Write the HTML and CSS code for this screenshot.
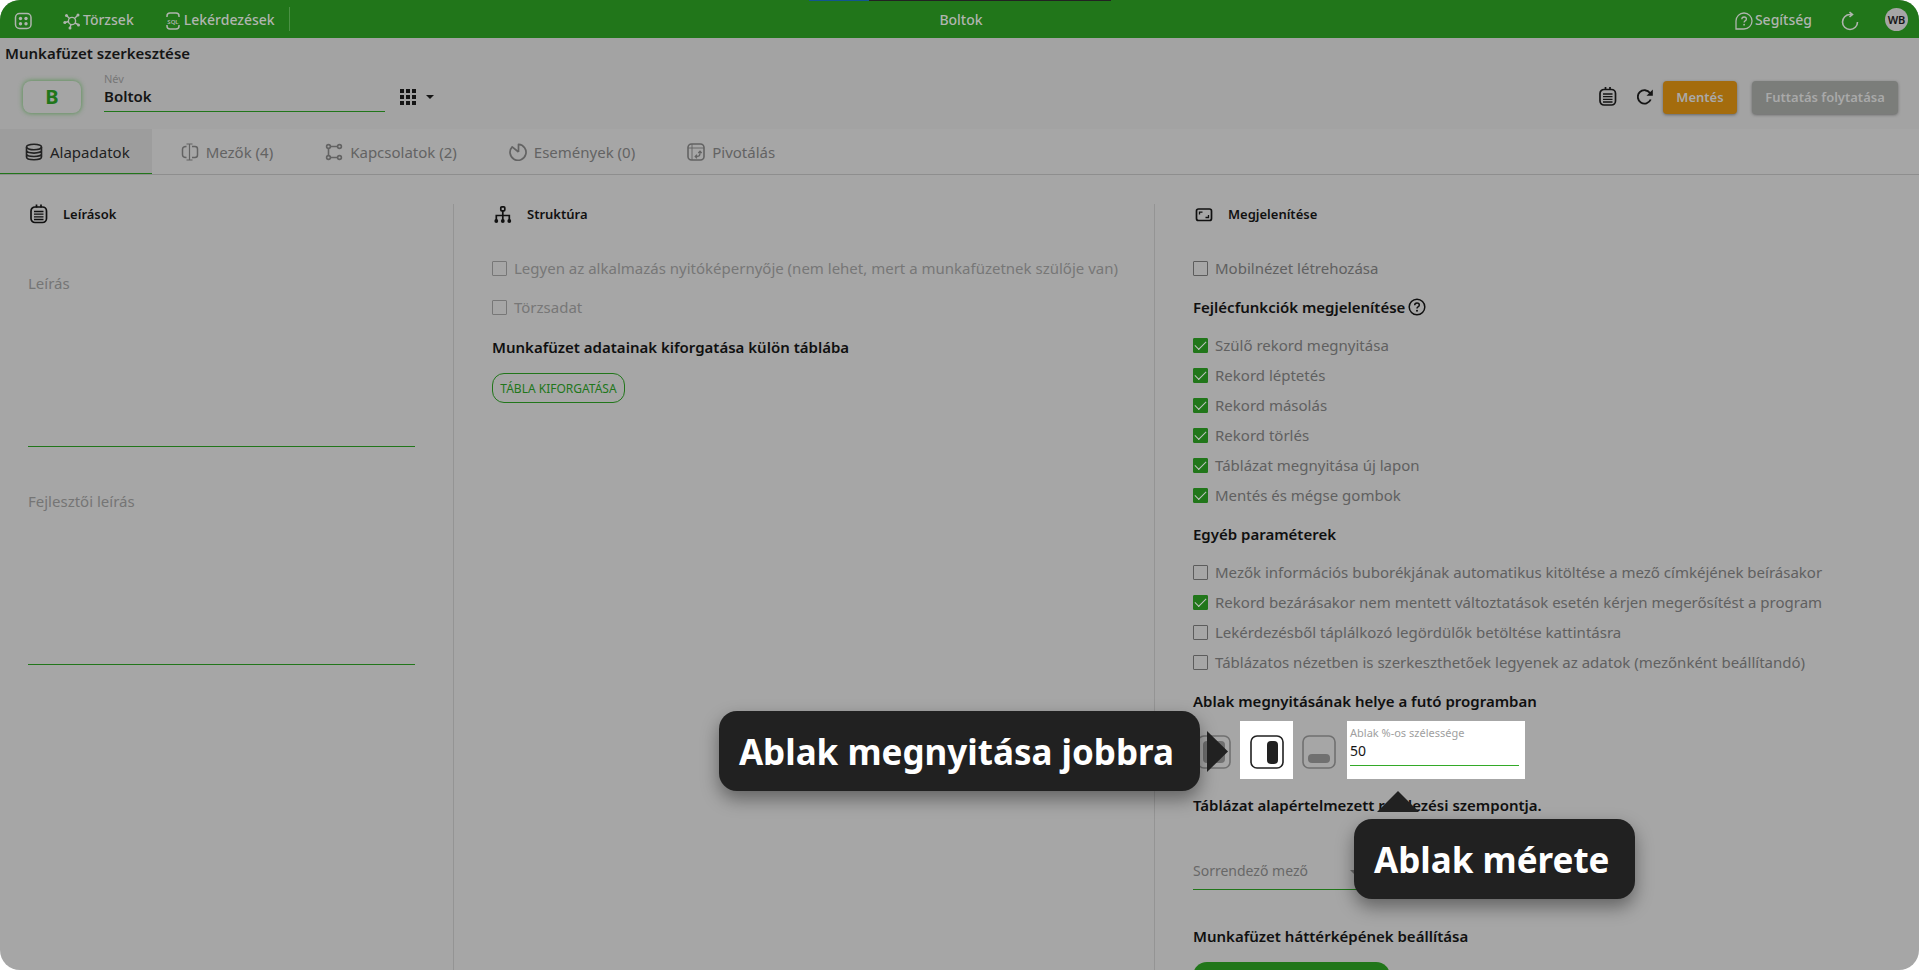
FILE: index.html
```html
<!DOCTYPE html>
<html lang="hu">
<head>
<meta charset="utf-8">
<title>Boltok – Munkafüzet szerkesztése</title>
<link rel="stylesheet" href="styles.css">
</head>
<body>
<div class="app">
  <header class="topbar">
    <nav class="topnav">
      <button class="icon-btn" aria-label="Alkalmazások"><svg class="ico18" viewBox="0 0 18 18"><rect x="1.500" y="1.500" width="15.500" height="15" rx="4" fill="none" stroke="currentColor" stroke-width="1.500"/><g fill="currentColor"><circle cx="6.500" cy="6.500" r="1.700"/><circle cx="12" cy="6.500" r="1.700"/><circle cx="6.500" cy="11.800" r="1.700"/><circle cx="12" cy="11.800" r="1.700"/></g></svg></button>
      <a class="navlink" href="#"><svg class="ico18" viewBox="0 0 18 18"><g fill="none" stroke="currentColor" stroke-width="1.400"><circle cx="9" cy="9" r="3.600"/><path d="M6.500 6.500 4 4M11.500 6.500 14.500 3.500M5.500 9.500 2 10.500M12 11l3 1.500M8 12.500 7 16"/></g><g fill="currentColor"><circle cx="3.500" cy="3.500" r="1.500"/><circle cx="15" cy="3" r="1.500"/><circle cx="1.800" cy="10.500" r="1.500"/><circle cx="15.500" cy="13" r="1.500"/><circle cx="7" cy="16" r="1.500"/></g></svg>Törzsek</a>
      <a class="navlink second" href="#"><svg class="ico18" viewBox="0 0 18 18"><path d="M3 5V4q0-3 3-3h6q3 0 3 3v1M3 13v1q0 3 3 3h6q3 0 3-3v-1" fill="none" stroke="currentColor" stroke-width="1.500"/><text x="9" y="11.500" text-anchor="middle" class="sql">SQL</text></svg>Lekérdezések</a>
    </nav>
    <span class="apptitle">Boltok</span>
    <div class="topright">
      <a class="navlink" href="#"><svg class="ico18" viewBox="0 0 18 18"><g fill="none" stroke="currentColor" stroke-width="1.300"><path d="M1 17V9a8 8 0 1 1 8 8Z"/><path d="M6.800 7.300q0-2.300 2.300-2.300t2.300 2q0 1.200-1.300 1.900-1 .6-1 1.700"/></g><circle cx="9.100" cy="12.700" r=".9" fill="currentColor"/></svg>Segítség</a>
      <button class="icon-btn" aria-label="Frissítés"><svg class="ico20" viewBox="0 0 20 20"><path d="M17.500 11a7.500 7.500 0 1 1-7.500-7.500h2M9.500 1 12.500 3.500 9.500 6" fill="none" stroke="currentColor" stroke-width="1.600"/></svg></button>
      <span class="avatar">WB</span>
    </div>
    <div class="strip"><i></i></div>
  </header>

  <section class="workbook">
    <h1>Munkafüzet szerkesztése</h1>
    <div class="toolbar">
      <span class="badge">B</span>
      <div class="namefield"><label for="nev">Név</label><input id="nev" value="Boltok"></div>
      <button class="gridpick" aria-label="Ikon választása"><svg class="ico16" viewBox="0 0 16 16"><path d="M0 0h4v4H0zM6 0h4v4H6zM12 0h4v4h-4zM0 6h4v4H0zM6 6h4v4H6zM12 6h4v4h-4zM0 12h4v4H0zM6 12h4v4H6zM12 12h4v4h-4z" fill="currentColor"/></svg><svg class="caret" viewBox="0 0 8 4"><path d="M0 0h8L4 4z" fill="currentColor"/></svg></button>
      <div class="actions">
        <button class="icon-btn dark" aria-label="Leírás"><svg class="ico20" viewBox="0 0 20 20"><g fill="none" stroke="currentColor"><rect x="3" y="2.500" width="15.500" height="15.500" rx="4" stroke-width="1.700"/><path d="M6 7h9.500M6 9.700h9.500M6 12.400h9.500M6 15h9.500" stroke-width="1.300"/><path d="M8.500 0v3M13 0v3" stroke-width="1.700"/></g></svg></button>
        <button class="icon-btn dark reload" aria-label="Újratöltés"><svg class="ico16" viewBox="0 0 16 16"><path d="M13.700 10.500A6.700 6.700 0 1 1 13 4" fill="none" stroke="currentColor" stroke-width="1.900"/><path d="M15.800.500v6.300H9.500z" fill="currentColor"/></svg></button>
        <button class="btn save">Mentés</button>
        <button class="btn run">Futtatás folytatása</button>
      </div>
    </div>
  </section>

  <nav class="tabs">
    <button class="tab active"><svg class="ico18" viewBox="0 0 18 18"><g fill="none" stroke="currentColor" stroke-width="1.600"><ellipse cx="9" cy="4" rx="7.500" ry="2.800"/><path d="M1.500 4v10c0 3.700 15 3.700 15 0V4M1.500 7.300c0 3.700 15 3.700 15 0M1.500 10.700c0 3.700 15 3.700 15 0"/></g></svg>Alapadatok</button>
    <button class="tab"><svg class="ico18" viewBox="0 0 18 18"><g fill="none" stroke="currentColor" stroke-width="1.500"><path d="M5.500 3.500H5Q1.500 3.500 1.500 6.500v5q0 3 3.500 3h.5M11 3.500h3q2.500 0 2.500 2.500v6q0 2.500-2.500 2.500h-3"/><path d="M8.500 1v16M5.500 1h6M5.500 17h6" stroke-width="1.200"/></g></svg>Mezők (4)</button>
    <button class="tab"><svg class="ico18" viewBox="0 0 18 18"><g fill="none" stroke="currentColor" stroke-width="1.600"><circle cx="3.500" cy="3.500" r="1.900"/><circle cx="14.500" cy="3.500" r="1.900"/><circle cx="3.500" cy="14.500" r="1.900"/><circle cx="14.500" cy="14.500" r="1.900"/><path d="M5.500 3.500h7M3.500 5.500v7M5.500 14.500h7"/></g></svg>Kapcsolatok (2)</button>
    <button class="tab"><svg class="ico18" viewBox="0 0 18 18"><path d="M9.500 9V1.300A8 8 0 1 1 3.200 3.800L9.500 9" fill="none" stroke="currentColor" stroke-width="1.700" stroke-linejoin="round"/></svg>Események (0)</button>
    <button class="tab"><svg class="ico18" viewBox="0 0 18 18"><g fill="none" stroke="currentColor"><rect x="1" y="1" width="16" height="16" rx="3.500" stroke-width="1.600"/><path d="M1 5h16M5 1v16" stroke-width=".9"/><path d="M8.500 13.500h1.500q3 0 3-3V8.500M11.300 10l1.700-1.800L14.700 10M10 11.800l-1.800 1.700L10 15.200" stroke-width="1.200"/></g></svg>Pivotálás</button>
  </nav>

  <main class="columns">
    <section class="col first">
      <h2><svg class="ico20" viewBox="0 0 20 20"><g fill="none" stroke="currentColor"><rect x="3" y="3" width="15.500" height="15.500" rx="4" stroke-width="1.700"/><path d="M6 7.500h9.500M6 10.200h9.500M6 12.900h9.500M6 15.500h9.500" stroke-width="1.300"/><path d="M8.500.5v3M13 .5v3" stroke-width="1.700"/></g></svg>Leírások</h2>
      <textarea aria-label="Leírás" placeholder="Leírás"></textarea>
      <textarea aria-label="Fejlesztői leírás" placeholder="Fejlesztői leírás"></textarea>
    </section>

    <section class="col middle">
      <h2><svg class="ico20" viewBox="0 0 20 20"><g fill="none" stroke="currentColor" stroke-width="1.700"><rect x="8.800" y="2.800" width="4" height="4" rx="1"/><path d="M10.800 7v9M4.300 16v-4.500h13v4.500"/></g><g fill="currentColor"><circle cx="4.300" cy="17" r="1.900"/><circle cx="10.800" cy="17" r="1.900"/><circle cx="17.300" cy="17" r="1.900"/></g></svg>Struktúra</h2>
      <div class="spaced">
        <label class="check off"><input type="checkbox" disabled>Legyen az alkalmazás nyitóképernyője (nem lehet, mert a munkafüzetnek szülője van)</label>
        <label class="check off"><input type="checkbox" disabled>Törzsadat</label>
      </div>
      <h3>Munkafüzet adatainak kiforgatása külön táblába</h3>
      <button class="pivot">TÁBLA KIFORGATÁSA</button>
    </section>

    <section class="col last">
      <h2><svg class="ico20" viewBox="0 0 20 20"><rect x="3.500" y="5" width="15" height="11.500" rx="2" fill="none" stroke="currentColor" stroke-width="1.700"/><path d="M6.500 10.500V8.200H9.500M15.500 11V13.500H12.500" fill="none" stroke="currentColor" stroke-width="1.300"/></svg>Megjelenítése</h2>
      <label class="check"><input type="checkbox">Mobilnézet létrehozása</label>
      <h3>Fejlécfunkciók megjelenítése<svg class="help" viewBox="0 0 18 18"><g fill="none" stroke="currentColor" stroke-width="1.500"><circle cx="9" cy="9" r="7.800"/><path d="M6.700 7.300q0-2.300 2.300-2.300t2.300 2q0 1.200-1.300 1.900-1 .6-1 1.700"/></g><circle cx="9" cy="12.800" r="1" fill="currentColor"/></svg></h3>
      <label class="check"><input type="checkbox" checked>Szülő rekord megnyitása</label>
      <label class="check"><input type="checkbox" checked>Rekord léptetés</label>
      <label class="check"><input type="checkbox" checked>Rekord másolás</label>
      <label class="check"><input type="checkbox" checked>Rekord törlés</label>
      <label class="check"><input type="checkbox" checked>Táblázat megnyitása új lapon</label>
      <label class="check"><input type="checkbox" checked>Mentés és mégse gombok</label>
      <h3>Egyéb paraméterek</h3>
      <label class="check"><input type="checkbox">Mezők információs buborékjának automatikus kitöltése a mező címkéjének beírásakor</label>
      <label class="check"><input type="checkbox" checked>Rekord bezárásakor nem mentett változtatások esetén kérjen megerősítést a program</label>
      <label class="check"><input type="checkbox">Lekérdezésből táplálkozó legördülők betöltése kattintásra</label>
      <label class="check"><input type="checkbox">Táblázatos nézetben is szerkeszthetőek legyenek az adatok (mezőnként beállítandó)</label>
      <h3 class="tight">Ablak megnyitásának helye a futó programban</h3>
      <div class="placement">
        <button class="place" aria-label="Középen"><svg class="ico34" viewBox="0 0 34 34"><rect x="1" y="1" width="32" height="32" rx="6" fill="none" stroke="currentColor" stroke-width="1.600"/><rect x="6" y="6" width="22" height="22" rx="4" fill="currentColor"/></svg></button>
        <div class="lit option">
          <button class="place" aria-label="Jobbra"><svg class="ico34" viewBox="0 0 34 34"><rect x="1" y="1" width="32" height="32" rx="6" fill="none" stroke="currentColor" stroke-width="1.600"/><rect x="17" y="6" width="11" height="23" rx="4" fill="currentColor"/></svg></button>
          <div class="callout left">Ablak megnyitása jobbra</div>
        </div>
        <button class="place" aria-label="Alul"><svg class="ico34" viewBox="0 0 34 34"><rect x="1" y="1" width="32" height="32" rx="6" fill="none" stroke="currentColor" stroke-width="1.600"/><rect x="6" y="19" width="22" height="9" rx="4" fill="currentColor"/></svg></button>
        <div class="lit sizefield">
          <label for="szel">Ablak %-os szélessége</label>
          <input id="szel" value="50">
          <div class="callout below">Ablak mérete</div>
        </div>
      </div>
      <h3 class="order">Táblázat alapértelmezett rendezési szempontja.</h3>
      <div class="selectwrap"><select aria-label="Sorrendező mező"><option>Sorrendező mező</option></select><svg class="caret" viewBox="0 0 8 4"><path d="M0 0h8L4 4z" fill="currentColor"/></svg></div>
      <h3 class="map">Munkafüzet háttérképének beállítása</h3>
      <button class="upload" aria-label="Háttérkép feltöltése"></button>
    </section>
  </main>
</div>
</body>
</html>
```
FILE: styles.css
```css
* { box-sizing: border-box; }
body { margin: 0; background: #fff; font-family: "Noto Sans", sans-serif; font-size: 14px; }
button, input, textarea, select { font: inherit; color: inherit; border: 0; background: none; padding: 0; margin: 0; border-radius: 0; }
h1, h2, h3 { margin: 0; }
svg { display: block; flex: none; }

.app { height: 100vh; overflow: hidden; display: flex; flex-direction: column; background: #a6a6a6; border-radius: 20px; color: #151515; }
.ico16 { width: 16px; height: 16px; }
.ico18 { width: 18px; height: 18px; }
.ico20 { width: 20px; height: 20px; }
.ico34 { width: 34px; height: 34px; }

/* top bar */
.topbar { position: relative; flex: none; height: 38px; display: grid; grid-template-columns: 1fr auto 1fr; align-items: center; background: #21761a; color: #b0b5af; font-weight: 500; padding: 0 11px 0 14px; }
.topnav, .topright { display: flex; align-items: center; }
.topnav { height: 24px; justify-self: start; border-right: 1px solid #4b9145; padding-right: 14px; }
.topnav svg, .topright svg { margin-top: 3px; }
.navlink { display: flex; align-items: center; gap: 2px; color: inherit; text-decoration: none; margin-left: 31px; }
.navlink.second { margin-left: 30px; }
.sql { font-size: 6px; font-weight: 600; fill: currentColor; }
.topright { justify-self: end; }
.topright .icon-btn { margin: 0 25px 0 28px; }
.avatar { width: 23px; height: 23px; border-radius: 50%; background: #a6a6a6; color: #151515; font-size: 11px; font-weight: 600; display: grid; place-items: center; }
.strip { position: absolute; top: 0; left: 50%; width: 302px; margin-left: -151px; height: 1px; background: #222; }
.strip i { display: block; width: 60px; height: 1px; background: #12558f; }

/* workbook header */
.workbook { flex: none; background: #a3a3a3; padding: 0 21px 3px 5px; }
.workbook h1 { font-size: 15px; line-height: 30px; font-weight: 600; }
.toolbar { display: flex; align-items: center; height: 58px; }
.badge { width: 58px; height: 32px; margin: 0 23px 0 18px; border-radius: 8px; background: #a5a5a5; box-shadow: 0 0 5px #4c8f47; color: #21761a; font-size: 20px; line-height: 32px; font-weight: 700; text-align: center; }
.namefield { width: 281px; height: 40px; margin-bottom: 10px; display: flex; flex-direction: column; border-bottom: 1px solid #21761a; }
.namefield label { font-size: 11px; line-height: 14px; color: #777; }
.namefield input { width: 100%; font-size: 15px; font-weight: 600; line-height: 20px; height: 20px; }
.gridpick { display: flex; align-items: center; gap: 10px; margin-left: 15px; }
.caret { width: 8px; height: 4px; }
.actions { display: flex; align-items: center; margin-left: auto; }
.actions .reload { margin: 0 10px 0 20px; }
.btn { height: 33px; border-radius: 4px; font-size: 13px; font-weight: 600; color: #a9a9a9; box-shadow: 0 1px 3px #666; }
.save { width: 74px; background: #a46c0d; }
.run { width: 146px; margin-left: 15px; background: #7b7d7a; }

/* tabs */
.tabs { flex: none; display: flex; height: 46px; border-bottom: 1px solid #8e8e8e; color: #636363; }
.tab { display: flex; align-items: center; gap: 7px; padding: 0 25px 0 27px; font-size: 15px; }
.tab.active { padding: 1px 22px 0 25px; margin-right: 2px; background: #9d9d9d; color: #222; border-bottom: 1px solid #21761a; }

/* columns */
.columns { flex: 1; min-height: 0; display: grid; grid-template-columns: 454fr 701fr 764fr; padding-top: 29px; }
.col { border-right: 1px solid #949494; padding: 0 38px; min-width: 0; }
.col.first { padding-left: 28px; }
.col.last { border: 0; }
h2 { display: flex; align-items: center; gap: 15px; height: 20px; margin-bottom: 29px; font-size: 13px; font-weight: 600; color: #111; }
.col.first h2 { margin-bottom: 46px; }
textarea { display: block; width: 100%; height: 177px; resize: none; font-size: 15px; line-height: 20px; padding-top: 3px; border-bottom: 1px solid #21761a; margin-bottom: 41px; }
textarea::placeholder { color: #757575; opacity: 1; }
.check { display: flex; align-items: center; gap: 7px; height: 30px; font-size: 15px; color: #606060; white-space: nowrap; }
.check.off { color: #777; }
.check input { appearance: none; flex: none; width: 15px; height: 15px; border: 1px solid #5c5c5c; border-radius: 1px; }
.check.off input { border-color: #777; }
.check input:checked { background: #21761a; border-color: #21761a; display: grid; place-items: center; }
.check input:checked::after { content: ""; width: 10px; height: 5px; border: solid #c4c4c4; border-width: 0 0 1px 1px; transform: translateY(-1px) rotate(-45deg); }
.spaced { display: grid; gap: 9px; }
h3 { display: flex; align-items: center; font-size: 15px; line-height: 20px; font-weight: 600; color: #101010; padding: 14px 0 13px; white-space: nowrap; }
.middle h3 { padding: 15px 0 16px; }
.help { width: 18px; height: 18px; margin-left: 3px; }
.pivot { height: 30px; width: 133px; border: 1px solid #21761a; border-radius: 12px; color: #21761a; font-size: 12px; }
h3.tight { padding-bottom: 10px; }

/* window placement */
.placement { display: flex; align-items: center; height: 58px; padding-left: 4px; }
.place { display: block; color: #707070; padding-top: 4px; }
.lit { position: relative; align-self: stretch; background: #fff; }
.option { width: 53px; margin: 0 9px; display: grid; place-items: center; }
.option .place { color: #212121; }
.sizefield { width: 178px; margin-left: 11px; padding: 4px 6px 13px 3px; display: flex; flex-direction: column; }
.sizefield label { font-size: 11px; line-height: 16px; color: #a0a0a0; }
.sizefield input { width: 100%; height: 25px; padding-bottom: 5px; border-bottom: 1px solid #33aa28; }
.callout { position: absolute; z-index: 2; height: 80px; line-height: 82px; padding: 0 26px 0 20px; border-radius: 18px; background: #212121; color: #fff; font-size: 35px; font-weight: 700; white-space: nowrap; box-shadow: 0 8px 18px rgba(0, 0, 0, .4); }
.callout::after { content: ""; position: absolute; background: #212121; }
.callout.left { right: 93px; top: -10px; }
.callout.left::after { left: calc(100% + 7px); top: 20px; width: 21px; height: 41px; clip-path: polygon(0 0, 100% 50%, 0 100%); }
.callout.below { left: 7px; top: 98px; }
.callout.below::after { left: 23px; top: -28px; width: 42px; height: 21px; clip-path: polygon(0 100%, 50% 0, 100% 100%); }

h3.order { padding: 16px 0 0; }
.selectwrap { position: relative; width: 178px; height: 36px; margin-top: 39px; padding-right: 13px; display: flex; align-items: center; border-bottom: 1px solid #21761a; color: #686868; }
.selectwrap select { appearance: none; flex: 1; height: 100%; padding-bottom: 2px; }
h3.map { padding: 36px 0 16px; }
.upload { display: block; width: 197px; height: 32px; border-radius: 14px; background: #21761a; }
```
